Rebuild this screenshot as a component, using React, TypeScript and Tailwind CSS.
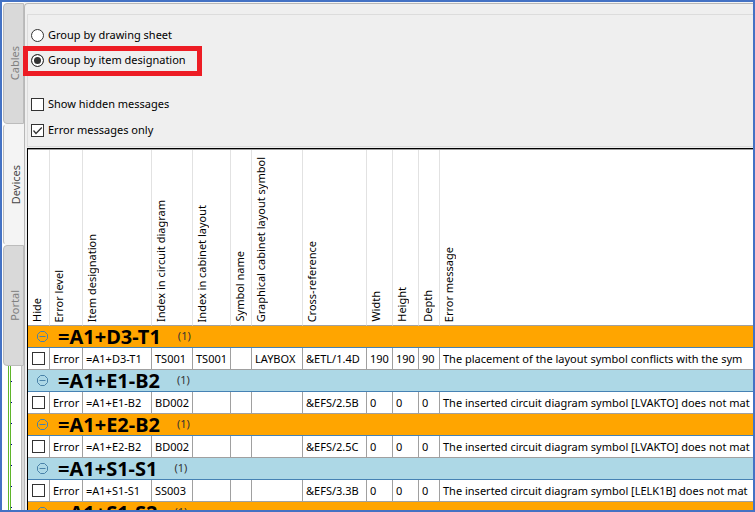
import { useState } from "react";
import clsx from "clsx";

interface Message {
  designation: string;
  circuitIndex: string;
  cabinetIndex: string;
  layoutSymbol: string;
  crossReference: string;
  width: number;
  height: number;
  depth: number;
  text: string;
}

const MESSAGES: Message[] = [
  {
    designation: "=A1+D3-T1",
    circuitIndex: "TS001",
    cabinetIndex: "TS001",
    layoutSymbol: "LAYBOX",
    crossReference: "&ETL/1.4D",
    width: 190,
    height: 190,
    depth: 90,
    text: "The placement of the layout symbol conflicts with the sym",
  },
  {
    designation: "=A1+E1-B2",
    circuitIndex: "BD002",
    cabinetIndex: "",
    layoutSymbol: "",
    crossReference: "&EFS/2.5B",
    width: 0,
    height: 0,
    depth: 0,
    text: "The inserted circuit diagram symbol [LVAKTO] does not mat",
  },
  {
    designation: "=A1+E2-B2",
    circuitIndex: "BD002",
    cabinetIndex: "",
    layoutSymbol: "",
    crossReference: "&EFS/2.5C",
    width: 0,
    height: 0,
    depth: 0,
    text: "The inserted circuit diagram symbol [LVAKTO] does not mat",
  },
  {
    designation: "=A1+S1-S1",
    circuitIndex: "SS003",
    cabinetIndex: "",
    layoutSymbol: "",
    crossReference: "&EFS/3.3B",
    width: 0,
    height: 0,
    depth: 0,
    text: "The inserted circuit diagram symbol [LELK1B] does not mat",
  },
];

const COLUMNS = [
  { label: "Hide", width: "w-[22px]" },
  { label: "Error level", width: "w-[33px]" },
  { label: "Item designation", width: "w-[69px]" },
  { label: "Index in circuit diagram", width: "w-[41px]" },
  { label: "Index in cabinet layout", width: "w-[38px]" },
  { label: "Symbol name", width: "w-[21px]" },
  { label: "Graphical cabinet layout symbol", width: "w-[51px]" },
  { label: "Cross-reference", width: "w-[64px]" },
  { label: "Width", width: "w-[26px]" },
  { label: "Height", width: "w-[26px]" },
  { label: "Depth", width: "w-[21px]" },
  { label: "Error message", width: "" },
];

const TABS = ["Cables", "Devices", "Portal"];

const checkboxClass =
  "size-[13px] shrink-0 appearance-none border border-[#333] bg-white";

function Tabs() {
  const [active, setActive] = useState("Devices");

  return (
    <nav className="flex w-[22px] flex-none flex-col bg-white pl-px pt-px">
      {TABS.map((tab) => (
        <button
          key={tab}
          onClick={() => setActive(tab)}
          className={clsx(
            "flex h-[121px] flex-none items-center justify-center rounded-l border-y border-l border-[#bcbcbc] pl-1 text-[11px]",
            tab === active
              ? "border-y-[#f4f4f4] bg-[#f4f4f4] text-[#444]"
              : "border-r bg-[#d9d9d9] text-[#808080]",
          )}
        >
          <span className="rotate-180 [writing-mode:vertical-rl]">{tab}</span>
        </button>
      ))}
      <DrawingEdge />
    </nav>
  );
}

// Sliver of the drawing sheet that shows below the tabs
function DrawingEdge() {
  return (
    <svg className="min-h-0 w-full flex-1" aria-hidden="true">
      <defs>
        <pattern id="grid" width="21" height="21" patternUnits="userSpaceOnUse">
          <rect x="8" y="15" width="1" height="1" fill="#00008b" />
        </pattern>
      </defs>
      <rect x="5" width="1" height="100%" fill="#5fb52a" />
      <rect x="7" width="1" height="100%" fill="#5fb52a" />
      <rect width="18" height="100%" fill="url(#grid)" />
      <rect x="18" width="1" height="100%" fill="#bcbcbc" />
      <rect x="19" width="2" height="100%" fill="#dcdcdc" />
    </svg>
  );
}

function Options() {
  const [grouping, setGrouping] = useState("item");
  const [showHidden, setShowHidden] = useState(false);
  const [errorsOnly, setErrorsOnly] = useState(true);

  const radioClass =
    "size-[13px] shrink-0 appearance-none rounded-full border border-[#333] bg-white checked:bg-[#333] checked:shadow-[inset_0_0_0_2px_#fff]";

  return (
    <div className="mt-2 flex flex-col items-start border-y border-l border-[#dcdcdc] pb-2 pl-[3px] pt-3 text-[11px]">
      <label className="flex h-4 items-center gap-1">
        <input
          type="radio"
          name="grouping"
          className={radioClass}
          checked={grouping === "sheet"}
          onChange={() => setGrouping("sheet")}
        />
        Group by drawing sheet
      </label>
      <label className="relative mt-[9px] flex h-4 items-center gap-1">
        <input
          type="radio"
          name="grouping"
          className={radioClass}
          checked={grouping === "item"}
          onChange={() => setGrouping("item")}
        />
        Group by item designation
        <span className="pointer-events-none absolute -bottom-2 -left-2 h-[30px] w-[179px] border-[5px] border-[#ed1c24]" />
      </label>
      <label className="mt-7 flex h-4 items-center gap-1">
        <input
          type="checkbox"
          className={checkboxClass}
          checked={showHidden}
          onChange={(e) => setShowHidden(e.target.checked)}
        />
        Show hidden messages
      </label>
      <label className="relative mt-[10px] flex h-4 items-center gap-1">
        <input
          type="checkbox"
          className={checkboxClass}
          checked={errorsOnly}
          onChange={(e) => setErrorsOnly(e.target.checked)}
        />
        {errorsOnly && (
          <svg
            className="pointer-events-none absolute left-0 size-[13px]"
            viewBox="0 0 13 13"
            fill="none"
            stroke="#333"
            strokeWidth="1.3"
          >
            <path d="M2.5 6.5 5 9.5 10.8 3.5" />
          </svg>
        )}
        Error messages only
      </label>
    </div>
  );
}

function GroupRow({ title, index }: { title: string; index: number }) {
  return (
    <tr className={index % 2 ? "bg-[#add8e6]" : "bg-[#ffa500]"}>
      <th
        colSpan={COLUMNS.length}
        className="h-[22px] border-b border-[#4682b4] p-0 text-left"
      >
        <div className="flex h-[21px] items-center pl-[9px]">
          <button aria-label="Collapse group" className="text-[#4a82a8]">
            <svg className="size-[11px]" viewBox="0 0 11 11" fill="none" stroke="currentColor">
              <path d="M3.5.5h4l3 3v4l-3 3h-4l-3-3v-4z" />
              <path d="M2.5 5.5h6" />
            </svg>
          </button>
          <span className="ml-[10px] text-[20px] leading-[21px] text-black">{title}</span>
          <span className="ml-[17px] text-[11px] font-normal text-[#333]">(1)</span>
        </div>
      </th>
    </tr>
  );
}

function MessageRow({ message }: { message: Message }) {
  const cells = [
    "Error",
    message.designation,
    message.circuitIndex,
    message.cabinetIndex,
    "",
    message.layoutSymbol,
    message.crossReference,
    message.width,
    message.height,
    message.depth,
    message.text,
  ];

  return (
    <tr className="bg-white">
      <td className="h-[22px] border-b border-r border-[#a0a0a0] p-0">
        <input
          type="checkbox"
          aria-label={`Hide ${message.designation}`}
          className={clsx(checkboxClass, "ml-1 block")}
        />
      </td>
      {cells.map((cell, i) => (
        <td
          key={i}
          className="whitespace-nowrap border-b border-r border-[#a0a0a0] p-0 pl-[3px] leading-[21px] last:border-r-0"
        >
          {cell}
        </td>
      ))}
    </tr>
  );
}

function MessageTable() {
  return (
    <table className="w-full table-fixed border-separate border-spacing-0 text-[11px]">
      <thead>
        <tr>
          {COLUMNS.map(({ label, width }) => (
            <th
              key={label}
              className={clsx(
                "h-[176px] border-b border-r border-b-[#a0a0a0] border-r-[#e2e2e2] p-0 pb-[3px] align-bottom font-normal last:border-r-0",
                width,
              )}
            >
              <span className="block w-[18px] rotate-180 whitespace-nowrap text-left leading-[18px] [writing-mode:vertical-rl]">
                {label}
              </span>
            </th>
          ))}
        </tr>
      </thead>
      {MESSAGES.map((message, i) => (
        <tbody key={message.designation}>
          <GroupRow title={message.designation} index={i} />
          <MessageRow message={message} />
        </tbody>
      ))}
      <tbody>
        <GroupRow title="=A1+S1-S2" index={4} />
      </tbody>
    </table>
  );
}

export default function App() {
  return (
    <div className="flex h-screen overflow-hidden border-2 border-[#4472c4] bg-[#f4f4f4] font-['Noto_Sans','Open_Sans',sans-serif] text-black">
      <Tabs />
      <main className="mt-px flex min-w-0 flex-1 flex-col rounded-tl border-l border-t border-[#b8b8b8] bg-[#efefef] pl-[2px] pt-[2px]">
        <Options />
        <div className="mt-px min-h-0 flex-1 overflow-hidden border-l border-t border-black bg-white">
          <div className="border-t border-[#a0a0a0]">
            <MessageTable />
          </div>
        </div>
      </main>
    </div>
  );
}
